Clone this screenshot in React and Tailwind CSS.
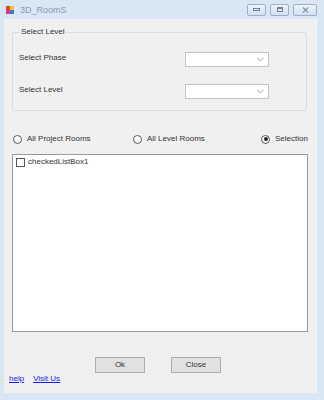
import React from 'react';

const font = { fontFamily: '"Liberation Sans", Arial, sans-serif' };

const Combo = () => (
  <div className="w-[84px] h-[15px] bg-white border border-[#c3c3c3] flex items-center justify-end pr-[4px]">
    <svg width="7" height="5" viewBox="0 0 7 5" className="text-[#9a9a9a]">
      <path d="M0.5 1 L3.5 4 L6.5 1" fill="none" stroke="currentColor" strokeWidth="1" />
    </svg>
  </div>
);

const Radio = ({ label, checked, width }) => (
  <div className={`flex items-center gap-[5px] ${width}`}>
    <div className="w-[9px] h-[9px] rounded-full border border-[#555] bg-white flex items-center justify-center">
      {checked && <div className="w-[4px] h-[4px] rounded-full bg-[#222]" />}
    </div>
    <span>{label}</span>
  </div>
);

const TitleButton = ({ width, children }) => (
  <div className={`${width} h-[12px] rounded-[2px] border border-[#9aafc9] bg-gradient-to-b from-[#eef3f9] to-[#d4e0ee] flex items-center justify-center`}>
    {children}
  </div>
);

export default function App() {
  return (
    <div className="w-[324px] h-[400px] bg-[#d9e6f4] flex flex-col text-[8px] leading-[10px] text-[#333]" style={font}>
      <div className="h-[19px] flex items-center pl-[6px] pr-[7px]">
        <svg width="8" height="8" viewBox="0 0 8 8">
          <rect x="0" y="0" width="4" height="4" fill="#e14a2a" />
          <rect x="4" y="0" width="4" height="4" fill="#f2c12e" />
          <rect x="0" y="4" width="4" height="4" fill="#d93a8a" />
          <rect x="4" y="4" width="4" height="4" fill="#3a78d4" />
        </svg>
        <span className="ml-[6px] text-[9px] text-[#8a9aae]">3D_RoomS</span>
        <div className="ml-auto flex items-center gap-[4px]">
          <TitleButton width="w-[19px]">
            <div className="w-[7px] h-[3px] border border-[#6d7f96]" />
          </TitleButton>
          <TitleButton width="w-[19px]">
            <div className="w-[6px] h-[5px] border border-[#6d7f96] border-t-2" />
          </TitleButton>
          <TitleButton width="w-[24px]">
            <svg width="7" height="6" viewBox="0 0 7 6">
              <path d="M1 0.5 L6 5.5 M6 0.5 L1 5.5" stroke="#8191a6" strokeWidth="1.1" />
            </svg>
          </TitleButton>
        </div>
      </div>

      <div className="ml-[4px] w-[313px] h-[374px] bg-[#f0f0f0] border-r border-[#f7f7f7] flex flex-col">
        <div className="mt-[13px] ml-[8px] w-[295px] h-[79px] border border-[#dcdcdc] rounded-[2px] pl-[6px] flex flex-col">
          <div className="-mt-[6px] ml-[1px] px-[1px] bg-[#f0f0f0] self-start">Select Level</div>
          <div className="mt-[15px] flex items-center">
            <span className="w-[166px] mb-[3px]">Select Phase</span>
            <Combo />
          </div>
          <div className="mt-[17px] flex items-center">
            <span className="w-[166px] mb-[3px]">Select Level</span>
            <Combo />
          </div>
        </div>

        <div className="mt-[23px] ml-[9px] flex items-center h-[10px]">
          <Radio label="All Project Rooms" width="w-[120px]" />
          <Radio label="All Level Rooms" width="w-[128px]" />
          <Radio label="Selection" checked />
        </div>

        <div className="mt-[10px] ml-[8px] w-[296px] h-[178px] bg-white border border-[#9a9a9a] pl-[3px] pt-[2px]">
          <div className="flex items-center gap-[3px]">
            <div className="w-[9px] h-[9px] border border-[#555] bg-white" />
            <span>checkedListBox1</span>
          </div>
        </div>

        <div className="mt-[25px] ml-[91px] flex gap-[26px]">
          <button className="w-[50px] h-[16px] bg-[#e1e1e1] border border-[#adadad] text-[8px] leading-none">Ok</button>
          <button className="w-[50px] h-[16px] bg-[#e1e1e1] border border-[#adadad] text-[8px] leading-none">Close</button>
        </div>

        <div className="mt-[1px] ml-[5px] flex gap-[9px]">
          <a className="text-[#1a1aee] underline">help</a>
          <a className="text-[#1a1aee] underline">Visit Us</a>
        </div>
      </div>
    </div>
  );
}
